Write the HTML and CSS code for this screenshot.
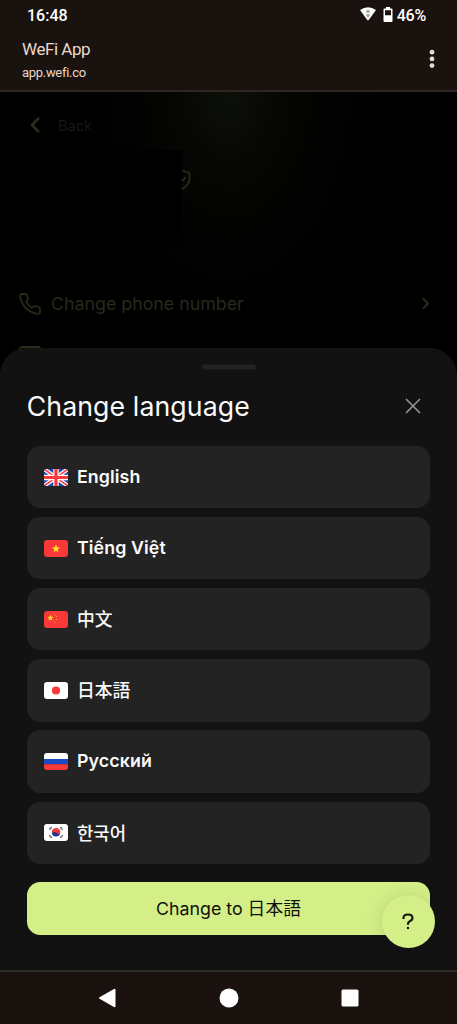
FILE: index.html
```html
<!DOCTYPE html>
<html lang="en">
<head>
<meta charset="utf-8">
<title>WeFi App</title>
<link rel="stylesheet" href="styles.css">
</head>
<body>
<div class="phone">
  <header class="top">
    <div class="status">
      <span class="time">16:48</span>
      <div class="status-right">
        <svg class="wifi" width="16" height="14" viewBox="0 0 16 14"><path d="M0 3.1Q8-2.8 16 3.1L8.7 13q-.7.8-1.4 0z" fill="#fff"/><path d="M8 2l2.400 3.800H5.600zM8 11L5.600 7.200h4.800z" fill="#a5a19e"/></svg>
        <svg class="battery" width="10" height="15" viewBox="0 0 10 15"><path fill-rule="evenodd" d="M3 0h4v1.500h1.500q1 0 1 1V14q0 1-1 1h-7q-1 0-1-1V2.500q0-1 1-1H3zM2 3.200v5h6v-5z" fill="#fff"/></svg>
        <span class="percent">46%</span>
      </div>
    </div>
    <div class="appbar">
      <div class="app-text">
        <div class="app-name">WeFi App</div>
        <div class="app-url">app.wefi.co</div>
      </div>
      <svg class="dots" width="6" height="20" viewBox="0 0 6 20" fill="#ead8cb"><circle cx="3" cy="3.200" r="2.400"/><circle cx="3" cy="9.900" r="2.400"/><circle cx="3" cy="16.600" r="2.400"/></svg>
    </div>
  </header>

  <main class="page">
    <div class="back">
      <svg width="12" height="16" viewBox="0 0 12 16" fill="none" stroke="#2e301c" stroke-width="2.600" stroke-linecap="round" stroke-linejoin="round"><path d="M9.200 1.700L3 8l6.200 6.300"/></svg>
      <span>Back</span>
    </div>
    <div class="profile">
      <div class="mask"></div>
      <svg class="shield" width="10" height="24" viewBox="0 0 10 24" fill="none" stroke="#292b19" stroke-width="1.800" stroke-linecap="round" stroke-linejoin="round"><path d="M-2 1.700L7.500 5v6.500q0 5.500-9 10.500M-3 12l2 2 4-4"/></svg>
    </div>
    <div class="option">
      <svg class="opt-icon" width="24" height="24" viewBox="0 0 24 24" fill="none" stroke="#27291a" stroke-width="1.800" stroke-linecap="round" stroke-linejoin="round"><path d="M22 16.920v3a2 2 0 0 1-2.180 2 19.790 19.790 0 0 1-8.630-3.070 19.500 19.500 0 0 1-6-6A19.790 19.790 0 0 1 2.120 4.180 2 2 0 0 1 4.110 2h3a2 2 0 0 1 2 1.720c.127.960.361 1.903.7 2.810a2 2 0 0 1-.45 2.110L8.090 9.910a16 16 0 0 0 6 6l1.270-1.270a2 2 0 0 1 2.110-.45c.907.339 1.850.573 2.810.7A2 2 0 0 1 22 16.920z"/></svg>
      <span class="opt-label">Change phone number</span>
      <svg width="8" height="13" viewBox="0 0 8 13" fill="none" stroke="#2b2d1a" stroke-width="2" stroke-linecap="round" stroke-linejoin="round"><path d="M1.500 2l4.500 4.500L1.500 11"/></svg>
    </div>
    <div class="option-next"></div>
  </main>

  <section class="sheet">
    <div class="handle"></div>
    <div class="sheet-head">
      <h1>Change language</h1>
      <svg width="16" height="16" viewBox="0 0 16 16" stroke="#929292" stroke-width="1.700" stroke-linecap="round"><path d="M1.500 1.500l13 13M14.500 1.500l-13 13"/></svg>
    </div>
    <div class="langs">
      <div class="lang">
        <svg class="flag" viewBox="0 0 24 17"><path fill="#2149b0" d="M0 0h24v17H0z"/><path d="M0 0l24 17M24 0L0 17" stroke="#fff" stroke-width="4"/><path d="M0 0l24 17M24 0L0 17" stroke="#f93939" stroke-width="1.500"/><path d="M12 0v17M0 8.500h24" stroke="#fff" stroke-width="5.400"/><path d="M12 0v17M0 8.500h24" stroke="#f93939" stroke-width="3.200"/></svg>
        <span class="en">English</span>
      </div>
      <div class="lang">
        <svg class="flag" viewBox="0 0 24 17"><path fill="#f93939" d="M0 0h24v17H0z"/><path fill="#ffda2c" d="M12 4.600l1.100 2.700 2.900.2-2.200 1.900.7 2.800-2.500-1.500-2.500 1.500.7-2.800L8 7.500l2.900-.2z"/></svg>
        <span class="vi">Tiếng Việt</span>
      </div>
      <div class="lang">
        <svg class="flag" viewBox="0 0 24 17"><path fill="#f93939" d="M0 0h24v17H0z"/><path fill="#ffda2c" d="M6.500 3.700l.9 2 2.200.2-1.700 1.500.5 2.100-1.900-1.100-1.900 1.100.5-2.100-1.700-1.500 2.200-.2z"/><g fill="#ffb52e"><circle cx="10.900" cy="3.800" r=".6"/><circle cx="12.400" cy="5.600" r=".6"/><circle cx="12.400" cy="8.600" r=".6"/><circle cx="10.900" cy="11" r=".6"/></g></svg>
        <span class="zh">中文</span>
      </div>
      <div class="lang">
        <svg class="flag" viewBox="0 0 24 17"><path fill="#fff" d="M0 0h24v17H0z"/><circle cx="12" cy="8.500" r="4.100" fill="#f93939"/></svg>
        <span class="ja">日本語</span>
      </div>
      <div class="lang">
        <svg class="flag" viewBox="0 0 24 17"><path fill="#fff" d="M0 0h24v6H0z"/><path fill="#1d4ac0" d="M0 5.900h24v5.400H0z"/><path fill="#f93939" d="M0 11.200h24V17H0z"/></svg>
        <span class="ru">Русский</span>
      </div>
      <div class="lang">
        <svg class="flag" viewBox="0 0 24 17"><path fill="#fff" d="M0 0h24v17H0z"/><circle cx="12" cy="8.500" r="4.100" fill="#26338f"/><path fill="#f93939" d="M8.300 6.600A4.100 4.100 0 0 1 15.900 9.700Q14 10.200 12.400 8.700T8 8.900Q7.900 7.700 8.300 6.600z"/><path d="M5.500 5.600l2-2.400M16.500 3.200l2 2.400M5.500 11.400l2 2.400M16.500 13.800l2-2.400" stroke="#333" stroke-width="1.400" stroke-dasharray="1.400 .4"/></svg>
        <span class="ko">한국어</span>
      </div>
    </div>
    <div class="submit"><span>Change to 日本語</span></div>
    <div class="help"><svg width="12" height="17" viewBox="0 0 12 17" fill="none" stroke="#10120a" stroke-width="2.100" stroke-linejoin="round"><path d="M1.500 6V4.800Q1.500 1.500 6 1.500t4.500 3.300q0 2.200-2.300 3.100Q6 8.700 6 10.500v1.300"/><path d="M6 13.900v2.200"/></svg></div>
  </section>

  <nav class="nav">
    <svg width="20" height="20" viewBox="0 0 20 20"><path d="M2 10L16.500 1.800v16.400z" fill="#fff" stroke="#fff" stroke-width="2" stroke-linejoin="round"/></svg>
    <svg width="20" height="20" viewBox="0 0 20 20"><circle cx="10" cy="10" r="9.500" fill="#fff"/></svg>
    <svg width="20" height="20" viewBox="0 0 20 20"><rect x="1.500" y="1.500" width="17" height="17" rx="1.500" fill="#fff"/></svg>
  </nav>
</div>
</body>
</html>
```
FILE: styles.css
```css
* { box-sizing: border-box; }
body { margin: 0; background: #000; }
svg { display: block; flex: none; }
span { white-space: nowrap; }
.phone {
  width: 457px;
  height: 1024px;
  display: flex;
  flex-direction: column;
  overflow: hidden;
  font-family: Inter, "Noto Sans CJK JP", sans-serif;
}
.top {
  height: 92px;
  flex: none;
  background: #1a120e;
  border-bottom: 2px solid #302520;
  font-family: Roboto, sans-serif;
}
.status {
  height: 30px;
  padding: 0 31px 0 27px;
  display: flex;
  justify-content: space-between;
  align-items: center;
  color: #fff;
  font-size: 16px;
  font-weight: 500;
}
.status-right { display: flex; align-items: center; }
.wifi { margin-right: 7px; margin-top: -3px; }
.battery { margin-right: 4px; margin-top: -2px; }
.percent { letter-spacing: -0.2px; }
.appbar {
  display: flex;
  justify-content: space-between;
  padding: 8px 22px 0;
  color: #ead8cb;
}
.app-name { font-size: 17px; line-height: 22px; letter-spacing: -0.45px; }
.app-url { font-size: 13px; line-height: 18px; margin-top: 4px; letter-spacing: -0.3px; }
.dots { margin-top: 11px; }

.page {
  height: 256px;
  flex: none;
  background: radial-gradient(ellipse 145px 225px at 50% 0, #0d1009 0%, #070804 30%, #020301 65%, #000 100%);
}
.back {
  height: 58px;
  padding: 8px 0 0 29px;
  display: flex;
  align-items: center;
  gap: 17px;
  font-size: 14.5px;
  letter-spacing: 0;
  color: #171717;
}
.profile { height: 132px; display: flex; }
.mask { width: 182px; height: 97px; background: #000; }
.shield { margin-top: 18px; }
.option {
  height: 43px;
  padding: 0 27px 0 18px;
  display: flex;
  align-items: center;
}
.opt-label { flex: 1; margin-left: 9px; font-size: 17.8px; color: #27291b; }
.option-next {
  width: 22px;
  height: 21px;
  margin: 21px 0 0 19px;
  border: 2px solid #292b19;
  border-radius: 3px;
}
.sheet {
  position: relative;
  z-index: 1;
  height: 622px;
  flex: none;
  padding: 0 26.7px;
  background: #121212;
  border-radius: 27px 27px 0 0;
}
.handle { width: 54px; height: 5px; margin: 0 auto; border-radius: 3px; background: #232323; transform: translateY(16.500px); }
.sheet-head {
  height: 93px;
  padding: 13px 9px 0 0;
  display: flex;
  align-items: center;
  justify-content: space-between;
}
h1 { margin: 0; font-size: 26.700px; font-weight: 400; line-height: 32px; color: #fafafa; white-space: nowrap; letter-spacing: 0.100px; }
.langs { display: flex; flex-direction: column; gap: 8.900px; }
.lang {
  height: 62.220px;
  padding-left: 17.300px;
  display: flex;
  align-items: center;
  gap: 9px;
  border-radius: 13.300px;
  background: #232323;
  color: #fafafa;
  font-size: 17.800px;
  font-weight: 600;
}
.lang span, .submit span { padding-bottom: 2px; }
.flag { width: 24px; height: 17px; border-radius: 3px; }
.en, .vi, .ru { letter-spacing: 0.100px; }
.zh { font-family: Inter, "Noto Sans CJK SC", sans-serif; font-weight: 500; }
.ja { font-weight: 500; }
.ko { font-family: Inter, "Noto Sans CJK KR", sans-serif; font-weight: 500; }
.submit {
  height: 53.300px;
  margin-top: 17.800px;
  display: flex;
  align-items: center;
  justify-content: center;
  border-radius: 13.300px;
  background: #d4ef88;
  color: #10120a;
  font-size: 17.800px;
}
.help {
  position: absolute;
  right: 22px;
  top: 546.700px;
  width: 53.400px;
  height: 53.400px;
  display: flex;
  align-items: center;
  justify-content: center;
  border-radius: 50%;
  background: #d4ef88;
  box-shadow: 0 2px 20px rgba(0, 0, 0, 0.130);
}
.nav {
  height: 54px;
  flex: none;
  display: flex;
  align-items: center;
  justify-content: center;
  gap: 101px;
  background: #1a120e;
  border-top: 2px solid #302a27;
}
```
